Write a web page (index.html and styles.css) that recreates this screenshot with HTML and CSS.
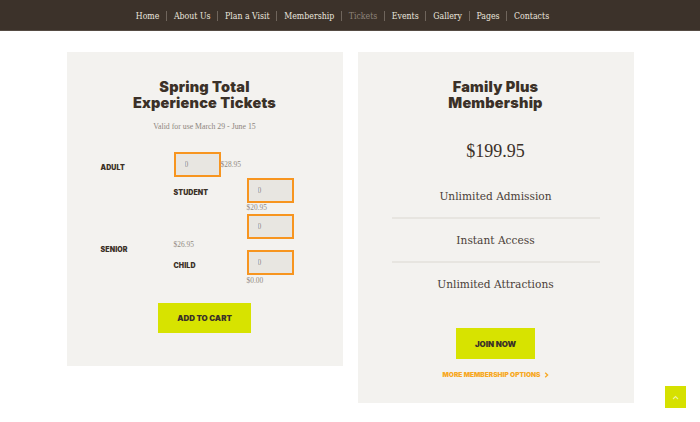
FILE: index.html
```html
<!DOCTYPE html>
<html lang="en">
<head>
<meta charset="utf-8">
<title>Tickets</title>
<link rel="stylesheet" href="styles.css">
</head>
<body>
<header class="topbar">
  <nav class="nav">
    <a class="nav-link" href="#">Home</a>
    <span class="nav-sep"></span>
    <a class="nav-link" href="#">About Us</a>
    <span class="nav-sep"></span>
    <a class="nav-link" href="#">Plan a Visit</a>
    <span class="nav-sep"></span>
    <a class="nav-link" href="#">Membership</a>
    <span class="nav-sep"></span>
    <a class="nav-link is-current" href="#">Tickets</a>
    <span class="nav-sep"></span>
    <a class="nav-link" href="#">Events</a>
    <span class="nav-sep"></span>
    <a class="nav-link" href="#">Gallery</a>
    <span class="nav-sep"></span>
    <a class="nav-link" href="#">Pages</a>
    <span class="nav-sep"></span>
    <a class="nav-link" href="#">Contacts</a>
  </nav>
</header>

<main class="cards">
  <section class="card card-tickets">
    <h2 class="card-title"><span class="title-line">Spring Total</span><span class="title-line">Experience Tickets</span></h2>
    <p class="card-sub">Valid for use March 29 - June 15</p>
    <form class="ticket-grid">
      <span class="t-label t-adult">ADULT</span>
      <div class="t-adult-cell">
        <input class="qty" type="text" value="0">
        <span class="t-price">$28.95</span>
      </div>
      <span class="t-label t-student">STUDENT</span>
      <input class="qty t-student-in" type="text" value="0">
      <span class="t-price t-student-price">$20.95</span>
      <input class="qty t-senior-in" type="text" value="0">
      <span class="t-price t-senior-price">$26.95</span>
      <span class="t-label t-senior">SENIOR</span>
      <span class="t-label t-child">CHILD</span>
      <input class="qty t-child-in" type="text" value="0">
      <span class="t-price t-child-price">$0.00</span>
    </form>
    <div class="btn-row">
      <a class="btn btn-cart" href="#">ADD TO CART</a>
    </div>
  </section>

  <section class="card card-member">
    <h2 class="card-title"><span class="title-line">Family Plus</span><span class="title-line">Membership</span></h2>
    <p class="member-price">$199.95</p>
    <ul class="features">
      <li class="feature">Unlimited Admission</li>
      <li class="feature">Instant Access</li>
      <li class="feature">Unlimited Attractions</li>
    </ul>
    <div class="btn-row">
      <a class="btn btn-join" href="#">JOIN NOW</a>
    </div>
    <a class="more-link" href="#">MORE MEMBERSHIP OPTIONS <svg class="chev" width="5" height="6" viewBox="0 0 5 6"><path d="M1.2 0.8 L3.6 3 L1.2 5.2" fill="none" stroke="#f7a823" stroke-width="1.3"/></svg></a>
  </section>
</main>

<a class="to-top" href="#" aria-label="Back to top">
  <svg width="7" height="5" viewBox="0 0 7 5"><path d="M1 4 L3.5 1.5 L6 4" fill="none" stroke="#eef39c" stroke-width="1.1"/></svg>
</a>
</body>
</html>
```

FILE: styles.css
```css
* { box-sizing: border-box; }
html, body { margin: 0; padding: 0; }
body {
  background: #ffffff;
  font-family: "Liberation Serif", serif;
  color: #3b3128;
}
a { text-decoration: none; }

.topbar {
  height: 31px;
  background: #3c322a;
  border-bottom: 1px solid #554b43;
  display: flex;
  justify-content: center;
  align-items: center;
  padding-top: 2px;
}
.nav {
  display: flex;
  align-items: center;
  margin-right: 15px;
}
.nav-link {
  color: #ebe6df;
  font-family: "DejaVu Serif", serif;
  font-stretch: condensed;
  font-size: 8.7px;
  padding: 0 6.75px;
  line-height: 12px;
}
.nav-link.is-current { color: #8d837a; }
.nav-sep {
  width: 1px;
  height: 10px;
  background: #6f655c;
}

.cards {
  display: flex;
  justify-content: center;
  align-items: flex-start;
  gap: 15px;
  padding-top: 21px;
}
.card {
  width: 276px;
  background: #f3f2ef;
  padding: 27px 34px 33px;
}
.card-title {
  margin: 0;
  text-align: center;
  font-family: "Inter", sans-serif;
  font-weight: 900;
  font-size: 14.5px;
  color: #3b3128;
  letter-spacing: 0.2px;
}
.title-line {
  display: block;
  height: 16px;
  line-height: 16px;
}
.card-sub {
  margin: 10px 0 0;
  text-align: center;
  font-size: 7.8px;
  line-height: 12px;
  color: #8d857d;
}

.ticket-grid {
  margin: 19px 0 0;
  display: grid;
  grid-template-columns: 73px 73px 1fr;
  grid-template-rows: 26px 26px 10px 26px 10px 26px 10px;
}
.t-label {
  font-family: "Inter", sans-serif;
  font-weight: 900;
  font-size: 7px;
  line-height: 10px;
  letter-spacing: 0.1px;
  color: #3b3128;
}
.t-price {
  font-size: 7.4px;
  line-height: 10px;
  color: #918980;
}
.qty {
  width: 47px;
  height: 25px;
  border: 2px solid #f7951f;
  background: #e8e6e1;
  padding: 0 0 0 9px;
  margin: 0;
  font-family: "Liberation Serif", serif;
  font-size: 7.5px;
  color: #928c86;
  outline: none;
}
.t-adult { grid-column: 1; grid-row: 1; margin-top: 11px; }
.t-adult-cell { grid-column: 2 / span 2; grid-row: 1; display: flex; align-items: center; height: 25px; }
.t-student { grid-column: 2; grid-row: 2; margin-top: 10px; }
.t-student-in { grid-column: 3; grid-row: 2; }
.t-student-price { grid-column: 3; grid-row: 3; margin-top: -1px; }
.t-senior-in { grid-column: 3; grid-row: 4; }
.t-senior-price { grid-column: 2; grid-row: 5; }
.t-senior { grid-column: 1; grid-row: 5 / span 2; margin-top: 5px; }
.t-child { grid-column: 2; grid-row: 6; margin-top: 11px; }
.t-child-in { grid-column: 3; grid-row: 6; }
.t-child-price { grid-column: 3; grid-row: 7; }

.btn-row {
  display: flex;
  justify-content: center;
}
.card-tickets .btn-row { margin-top: 17px; }
.btn {
  display: flex;
  align-items: center;
  justify-content: center;
  background: #d7e300;
  color: #3b3128;
  font-family: "Inter", sans-serif;
  font-weight: 900;
  font-size: 7.9px;
}
.btn-cart { width: 93px; height: 30px; }
.btn-join { width: 79px; height: 31px; }

.member-price {
  margin: 30px 0 0;
  text-align: center;
  font-size: 18px;
  line-height: 20px;
  color: #3b3128;
}
.features {
  list-style: none;
  margin: 14px 0 0;
  padding: 0;
}
.feature {
  text-align: center;
  font-family: "DejaVu Serif", serif;
  font-stretch: condensed;
  font-size: 11.8px;
  line-height: 14px;
  padding: 14px 0;
  color: #4a4038;
  border-bottom: 2px solid #e7e5e0;
}
.feature:last-child { border-bottom: none; }
.card-member .btn-row { margin-top: 23px; }
.card-member { padding-bottom: 23px; }
.more-link {
  display: flex;
  align-items: center;
  justify-content: center;
  gap: 3px;
  margin-top: 11px;
  font-family: "Inter", sans-serif;
  font-weight: 900;
  font-size: 6.6px;
  line-height: 10px;
  color: #f7a823;
}
.chev { display: block; }

.to-top {
  position: fixed;
  right: 14px;
  bottom: 14px;
  width: 21px;
  height: 22px;
  background: #d6e100;
  display: flex;
  align-items: center;
  justify-content: center;
}
```
